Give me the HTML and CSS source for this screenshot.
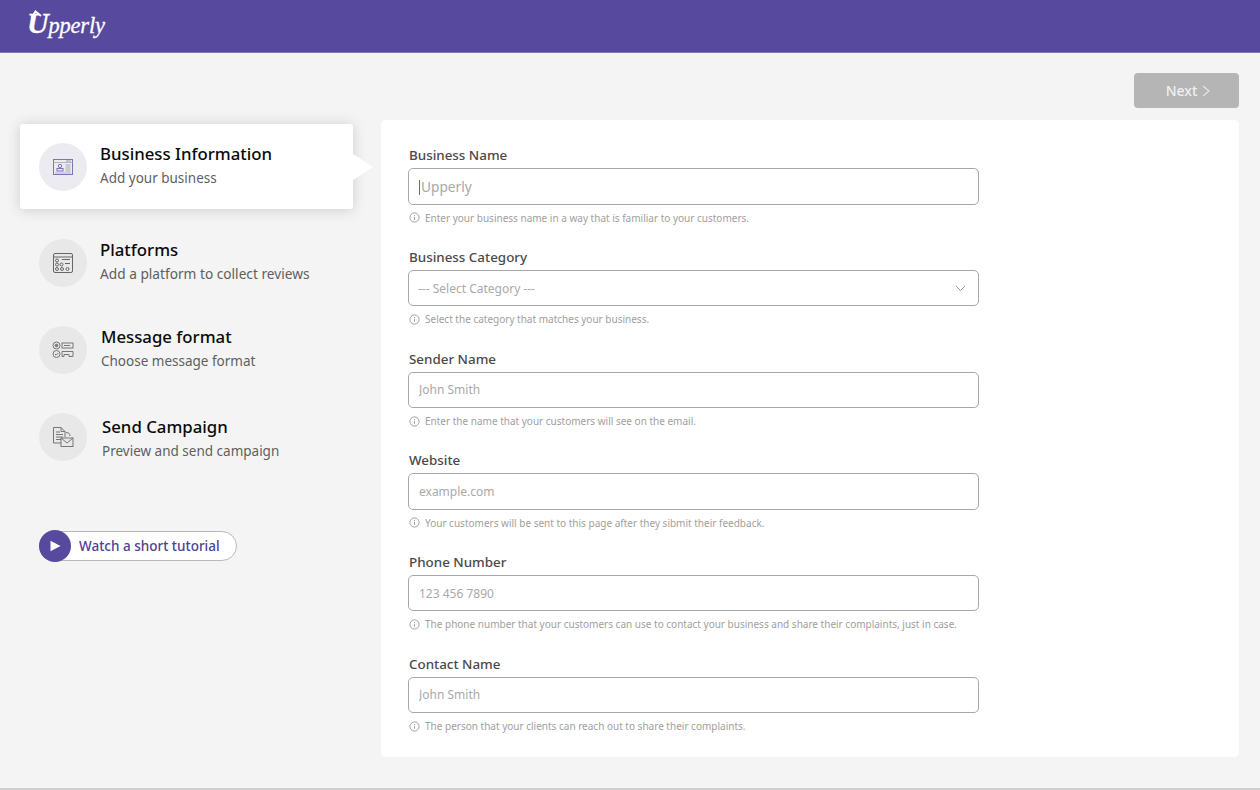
FILE: index.html
```html
<!DOCTYPE html>
<html lang="en">
<head>
<meta charset="utf-8">
<title>Upperly</title>
<link rel="stylesheet" href="styles.css">
</head>
<body>
<header class="topbar">
  <div class="logo">
    <svg class="logo-arrow" width="12" height="9" viewBox="0 0 12 9"><path d="M1.500 8 L5.500 1.500 L11 6" fill="none" stroke="#fff" stroke-width="2"/></svg>
    <span class="logo-text">Upperly</span>
  </div>
</header>
<div class="page">
  <aside class="sidebar">
    <div class="step step-active">
      <span class="step-icon step-icon-active">
        <svg width="22" height="20" viewBox="0 0 22 20" fill="none" stroke="#7d74b5" stroke-width="1"><rect x="1.500" y="2.500" width="19" height="15"/><path d="M1.500 5.500h19" stroke="#b4b4bf"/><path d="M14 4h5" stroke="#9c9ca6"/><circle cx="8" cy="9" r="1.700"/><rect x="5" y="11.500" width="6" height="2.500"/><path d="M13.500 8h5M13.500 10h5M13.500 12h5M13.500 14h5" stroke="#a8a8b2"/><path d="M3.500 16h15" stroke-dasharray="1 1"/></svg>
      </span>
      <div class="step-text">
        <div class="step-title">Business Information</div>
        <div class="step-sub">Add your business</div>
      </div>
    </div>
    <div class="step step-platforms">
      <span class="step-icon">
        <svg width="22" height="22" viewBox="0 0 22 22" fill="none" stroke="#666" stroke-width="1"><rect x="1.500" y="1.500" width="19" height="19" rx="1.500"/><path d="M1.500 5h19M10 7.500h8M13 11.500h5"/><circle cx="5" cy="8.500" r="1.500"/><circle cx="5" cy="12.500" r="1.500"/><circle cx="9.500" cy="12.500" r="1.500"/><circle cx="5" cy="17" r="1.500"/><circle cx="10" cy="17" r="1.500"/><circle cx="15.500" cy="17" r="1.500"/></svg>
      </span>
      <div class="step-text">
        <div class="step-title">Platforms</div>
        <div class="step-sub step-sub-wide">Add a platform to collect reviews</div>
      </div>
    </div>
    <div class="step step-message">
      <span class="step-icon">
        <svg width="22" height="18" viewBox="0 0 22 18" fill="none" stroke="#777" stroke-width="1"><circle cx="4.500" cy="4.500" r="3.500"/><circle cx="4.500" cy="4.500" r="1.300" fill="#777"/><circle cx="4.500" cy="13" r="3.500"/><path d="M3 13l1.200 1.200 2-2.200"/><rect x="10" y="2" width="11" height="5"/><path d="M12 4.500h6"/><path d="M10 10.500h11v5h-4v-2h-5v2h-2z"/></svg>
      </span>
      <div class="step-text">
        <div class="step-title">Message format</div>
        <div class="step-sub">Choose message format</div>
      </div>
    </div>
    <div class="step step-send">
      <span class="step-icon">
        <svg width="22" height="22" viewBox="0 0 22 22" fill="none" stroke="#777" stroke-width="1"><path d="M9 17H1.500V1.500H9l4 4V11"/><path d="M9 1.500v4h4"/><path d="M4 6h4M4 8.500h7M4 11h7M4 13.500h5"/><path d="M14 6.500c3 0 4 1.500 4 3.500"/><rect x="9" y="12" width="12" height="8.500"/><path d="M9 12l6 5 6-5"/></svg>
      </span>
      <div class="step-text">
        <div class="step-title">Send Campaign</div>
        <div class="step-sub">Preview and send campaign</div>
      </div>
    </div>
    <div class="tutorial">
      <span class="tutorial-play"><svg width="12" height="12" viewBox="0 0 12 12"><path d="M1.500 0.800 L11.500 6 L1.500 11.200 Z" fill="#fff"/></svg></span>
      <span class="tutorial-label">Watch a short tutorial</span>
    </div>
  </aside>
  <main class="content">
    <div class="actions">
      <button class="next" type="button">Next <svg width="8" height="12" viewBox="0 0 8 12" fill="none" stroke="#e8e8e8" stroke-width="1.100"><path d="M1 1l6 5-6 5"/></svg></button>
    </div>
    <form class="card">
      <div class="field">
        <label class="field-label">Business Name</label>
        <div class="control">
          <span class="caret"></span>
          <input class="input input-large" type="text" placeholder="Upperly">
        </div>
        <p class="hint"><svg class="info" width="11" height="11" viewBox="0 0 11 11" fill="none" stroke="#8a8a8a" stroke-width=".8"><circle cx="5.500" cy="5.500" r="4.600"/><path d="M5.500 4.800v3M5.500 3v1"/></svg>Enter your business name in a way that is familiar to your customers.</p>
      </div>
      <div class="field">
        <label class="field-label">Business Category</label>
        <div class="control select">
          <span class="select-value">--- Select Category ---</span>
          <svg width="11" height="7" viewBox="0 0 11 7" fill="none" stroke="#9a9a9a" stroke-width="1"><path d="M1 1l4.500 4.500L10 1"/></svg>
        </div>
        <p class="hint"><svg class="info" width="11" height="11" viewBox="0 0 11 11" fill="none" stroke="#8a8a8a" stroke-width=".8"><circle cx="5.500" cy="5.500" r="4.600"/><path d="M5.500 4.800v3M5.500 3v1"/></svg>Select the category that matches your business.</p>
      </div>
      <div class="field">
        <label class="field-label">Sender Name</label>
        <div class="control"><input class="input" type="text" placeholder="John Smith"></div>
        <p class="hint"><svg class="info" width="11" height="11" viewBox="0 0 11 11" fill="none" stroke="#8a8a8a" stroke-width=".8"><circle cx="5.500" cy="5.500" r="4.600"/><path d="M5.500 4.800v3M5.500 3v1"/></svg>Enter the name that your customers will see on the email.</p>
      </div>
      <div class="field">
        <label class="field-label">Website</label>
        <div class="control"><input class="input" type="text" placeholder="example.com"></div>
        <p class="hint"><svg class="info" width="11" height="11" viewBox="0 0 11 11" fill="none" stroke="#8a8a8a" stroke-width=".8"><circle cx="5.500" cy="5.500" r="4.600"/><path d="M5.500 4.800v3M5.500 3v1"/></svg>Your customers will be sent to this page after they sibmit their feedback.</p>
      </div>
      <div class="field">
        <label class="field-label">Phone Number</label>
        <div class="control"><input class="input" type="text" placeholder="123 456 7890"></div>
        <p class="hint"><svg class="info" width="11" height="11" viewBox="0 0 11 11" fill="none" stroke="#8a8a8a" stroke-width=".8"><circle cx="5.500" cy="5.500" r="4.600"/><path d="M5.500 4.800v3M5.500 3v1"/></svg>The phone number that your customers can use to contact your business and share their complaints, just in case.</p>
      </div>
      <div class="field">
        <label class="field-label">Contact Name</label>
        <div class="control"><input class="input" type="text" placeholder="John Smith"></div>
        <p class="hint"><svg class="info" width="11" height="11" viewBox="0 0 11 11" fill="none" stroke="#8a8a8a" stroke-width=".8"><circle cx="5.500" cy="5.500" r="4.600"/><path d="M5.500 4.800v3M5.500 3v1"/></svg>The person that your clients can reach out to share their complaints.</p>
      </div>
    </form>
  </main>
</div>
</body>
</html>
```
FILE: styles.css
```css
* { box-sizing: border-box; }
html, body { margin: 0; height: 790px; overflow: hidden; }
body {
  display: flex;
  flex-direction: column;
  background: #f4f4f4;
  border-bottom: 2px solid #cfcfcf;
  font-family: "Noto Sans", "Open Sans", sans-serif;
}
.topbar {
  height: 53px;
  flex: none;
  background: #574a9e;
  border-bottom: 1px solid #8177bb;
  padding-left: 27px;
  display: flex;
  align-items: flex-start;
}
.logo { position: relative; height: 44px; padding-top: 7px; }
.logo-text {
  display: block;
  font-family: "Liberation Serif", serif;
  font-style: italic;
  font-size: 22.500px;
  line-height: 32px;
  letter-spacing: -0.2px;
  color: #fff;
  white-space: nowrap;
  -webkit-text-stroke: 0.3px #fff;
}
.logo-text::first-letter { font-size: 30px; font-weight: 700; }
.logo-arrow { position: absolute; left: 3px; top: 10px; }
.page { flex: 1; display: flex; min-height: 0; }
.sidebar { width: 381px; flex: none; padding: 71px 0 0 20px; }
.step { display: flex; align-items: center; height: 48px; padding-left: 19px; }
.step-active {
  position: relative;
  width: 333px;
  height: 85px;
  background: #fff;
  border-radius: 3px;
  box-shadow: 0 1px 14px rgba(0, 0, 0, .16);
}
.step-active::after {
  content: "";
  position: absolute;
  left: 100%;
  top: 30px;
  border-left: 20px solid #fff;
  border-top: 13px solid transparent;
  border-bottom: 13px solid transparent;
}
.step-platforms { margin-top: 30px; }
.step-message, .step-send { margin-top: 39px; }
.step-icon {
  width: 48px;
  height: 48px;
  flex: none;
  border-radius: 50%;
  background: #e8e8e8;
  display: flex;
  align-items: center;
  justify-content: center;
}
.step-icon-active { background: #ebebf1; }
.step-text { margin-left: 13px; padding-bottom: 2px; }
.step-message .step-text { margin-left: 14px; }
.step-send .step-text { margin-left: 15px; padding: 4px 0 0; }
.step-title { font-size: 16.8px; line-height: 24px; font-weight: 500; color: #0a0a0a; }
.step-sub { font-size: 13.5px; line-height: 24px; color: #5f5f5f; }
.step-sub-wide { font-size: 13.7px; }
.tutorial {
  position: relative;
  display: flex;
  align-items: center;
  width: 197.5px;
  height: 30px;
  margin: 70px 0 0 19px;
  background: #fff;
  border: 1px solid #b9b9b9;
  border-radius: 15px;
}
.tutorial-play {
  position: absolute;
  left: -1px;
  top: -2px;
  width: 32px;
  height: 32px;
  border-radius: 50%;
  background: #574a9e;
  display: flex;
  align-items: center;
  justify-content: center;
}
.tutorial-label { margin-left: 39px; font-size: 13.5px; font-weight: 500; color: #4d4097; white-space: nowrap; }
.content { flex: 1; padding: 20px 21px 0 0; display: flex; flex-direction: column; }
.actions { display: flex; justify-content: flex-end; height: 35px; flex: none; }
.next {
  width: 105px;
  height: 35px;
  border: 0;
  border-radius: 4px;
  background: #b5b5b5;
  color: #f0f0f0;
  font: 500 14px "Noto Sans", sans-serif;
  display: flex;
  align-items: center;
  justify-content: center;
  gap: 5px;
  padding: 0 0 0 3px;
}
.card {
  margin-top: 12px;
  height: 637px;
  flex: none;
  background: #fff;
  border-radius: 5px;
  padding: 25.3px 0 0 27px;
  display: flex;
  flex-direction: column;
  gap: 21.15px;
}
.field { width: 571px; }
.field-label { display: block; height: 20px; margin-left: 1px; line-height: 20px; font-size: 13.4px; font-weight: 500; color: #4a4a4a; }
.control {
  position: relative;
  height: 36.5px;
  margin-top: 3px;
  border: 1px solid #a8a8a8;
  border-radius: 5px;
  background: #fff;
  display: flex;
  align-items: center;
}
.input {
  width: 100%;
  height: 100%;
  border: 0;
  background: transparent;
  outline: 0;
  padding: 0 10px;
  font: 12px "Noto Sans", sans-serif;
  border-radius: 5px;
}
.input-large { font-size: 13.7px; padding-left: 12px; }
.input::placeholder { color: #a9a9a9; opacity: 1; }
.caret { position: absolute; left: 10px; top: 11px; width: 1px; height: 15px; background: #6a60ad; }
.select { justify-content: space-between; padding: 0 12px 0 9px; }
.select-value { font-size: 12px; color: #a9a9a9; }
.hint {
  margin: 5px 0 0 1px;
  height: 16px;
  display: flex;
  align-items: center;
  white-space: nowrap;
  font-size: 10px;
  color: #a0a0a0;
}
.info { margin-right: 5px; flex: none; }
```
